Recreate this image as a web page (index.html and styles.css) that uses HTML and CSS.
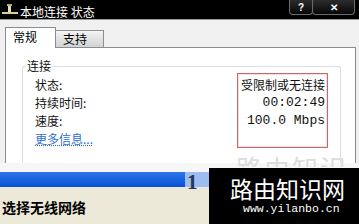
FILE: index.html
```html
<!DOCTYPE html>
<html lang="zh">
<head>
<meta charset="utf-8">
<link rel="stylesheet" href="styles.css">
</head>
<body>
<div class="screen">
  <div class="titlebar">
    <svg class="ticon" width="16" height="12" viewBox="0 0 16 12">
      <rect x="6" y="1" width="3" height="8" fill="#e8dfb8"/>
      <rect x="0" y="8" width="16" height="2" fill="#d8cfa0"/>
      <rect x="5" y="0" width="5" height="2" fill="#b8a878"/>
    </svg>
    <span class="ttitle">本地连接 状态</span>
    <div class="tbtns">
      <div class="tbtn help">?</div>
      <div class="tbtn close">✕</div>
    </div>
  </div>
  <div class="dialog">
    <div class="tabs">
      <div class="tab active">常规</div>
      <div class="tab">支持</div>
    </div>
    <div class="panel">
      <fieldset class="group">
        <legend>连接</legend>
        <div class="rows">
          <div class="labels">
            <div>状态:</div>
            <div>持续时间:</div>
            <div>速度:</div>
            <div class="link">更多信息...</div>
          </div>
          <div class="values">
            <div>受限制或无连接</div>
            <div class="mono">00:02:49</div>
            <div class="mono">100.0 Mbps</div>
          </div>
        </div>
      </fieldset>
    </div>
  </div>
  <div class="band"></div>
  <div class="bluebar"><div class="bluelight"></div></div>
  <div class="beige">选择无线网络</div>
  <div class="one">1</div>
  <div class="ghost"><div class="ghost-text">路由知识网</div></div>
  <div class="mark">
    <div class="mark-title">路由知识网</div>
    <div class="mark-url">www.yilanbo.cn</div>
  </div>
</div>
</body>
</html>
```
FILE: styles.css
```css
body {
  margin: 0;
  width: 359px;
  height: 224px;
  overflow: hidden;
  font-family: "Noto Sans CJK SC", sans-serif;
  font-size: 12px;
}
.screen {
  position: relative;
  width: 359px;
  height: 224px;
  overflow: hidden;
  display: flex;
  flex-direction: column;
  background: #f0f0f0;
}
.titlebar {
  flex: none;
  height: 19px;
  background: #000;
  color: #fff;
  display: flex;
  align-items: flex-start;
}
.ticon {
  margin: 4px 2px 0 2px;
}
.ttitle {
  margin-top: 5px;
  line-height: 14px;
  font-size: 12px;
}
.tbtns {
  margin-left: auto;
  margin-right: 4px;
  display: flex;
}
.tbtn {
  box-sizing: border-box;
  height: 15px;
  border: 1px solid #6c6c6c;
  border-top: none;
  border-radius: 0 0 4px 4px;
  background: linear-gradient(#2c2c2c, #070707);
  color: #fff;
  font: bold 10px "Liberation Sans", sans-serif;
  display: flex;
  align-items: center;
  justify-content: center;
}
.help { width: 24px; }
.close { width: 43px; margin-left: -1px; }
.dialog {
  flex: none;
  height: 143px;
  border-top: 1px solid #9a9a9a;
  display: flex;
  flex-direction: column;
  background: #f0f0f0;
}
.tabs {
  flex: none;
  height: 27px;
  padding-left: 5px;
  display: flex;
  align-items: flex-end;
}
.tab {
  box-sizing: border-box;
  width: 49px;
  height: 17px;
  margin-left: -1px;
  padding: 1px 0 0 7px;
  line-height: 14px;
  border: 1px solid #8e8f8f;
  border-bottom: none;
  background: linear-gradient(#f4f4f4, #d2d2d2);
  color: #000;
}
.tab.active {
  position: relative;
  z-index: 1;
  width: 51px;
  height: 21px;
  margin-left: 0;
  margin-bottom: -1px;
  padding: 2px 0 0 7px;
  background: #fff;
  border-color: #898c95;
}
.panel {
  flex: 1;
  margin: 0 3px 0 5px;
  background: #fff;
  border: 1px solid #898c95;
  border-bottom: none;
  display: flex;
  flex-direction: column;
}
.group {
  flex: 1;
  min-width: 0;
  margin: 12px 14px 0 16px;
  padding: 0 0 0 3px;
  border: 1px solid #d5dfe5;
  border-bottom: none;
  border-radius: 3px 3px 0 0;
}
.group legend {
  padding: 0 1px;
  line-height: 12px;
  font-size: 12px;
  color: #111;
}
.rows {
  display: flex;
  margin-left: 9px;
  padding-top: 4px;
}
.labels {
  flex: 1;
  line-height: 18px;
  color: #111;
}
.link {
  color: #2d6fd0;
  text-decoration: underline;
  text-decoration-style: dotted;
}
.values {
  box-sizing: border-box;
  width: 91px;
  margin: -3px 12px 0 0;
  padding: 2px 2px 10px;
  border: 1px solid #c86868;
  box-shadow: inset 0 0 0 1px #f6dede;
  text-align: right;
  line-height: 18px;
  color: #111;
}
.mono {
  font-family: "Liberation Mono", monospace;
  font-size: 13px;
}
.band {
  flex: none;
  height: 9px;
  background: #f6f6f6;
}
.bluebar {
  flex: none;
  height: 15px;
  background: linear-gradient(#2f74e8, #0652d6);
  display: flex;
}
.bluelight {
  margin-left: 185px;
  width: 30px;
  background: #9dbdf0;
}
.beige {
  flex: 1;
  background: #ece9d8;
  padding: 12px 0 0 2px;
  font-size: 14px;
  font-weight: bold;
  line-height: 17px;
  color: #000;
}
.one {
  position: absolute;
  left: 187px;
  top: 170px;
  font: bold 21px "Liberation Serif", serif;
  color: #2a3558;
}
.ghost {
  position: absolute;
  left: 236px;
  top: 153px;
  width: 123px;
  height: 14px;
  overflow: hidden;
}
.ghost-text {
  font-size: 26px;
  letter-spacing: 2px;
  line-height: 30px;
  color: #dcdcdc;
}
.mark {
  position: absolute;
  left: 209px;
  top: 168px;
  width: 150px;
  height: 56px;
  box-sizing: border-box;
  padding: 7px 0 0 21px;
  background: #000;
  color: #fff;
}
.mark-title {
  font-size: 23px;
  line-height: 26px;
}
.mark-url {
  margin: 1px 0 0 13px;
  font-family: "Liberation Mono", monospace;
  font-size: 11.5px;
  line-height: 14px;
}
```
